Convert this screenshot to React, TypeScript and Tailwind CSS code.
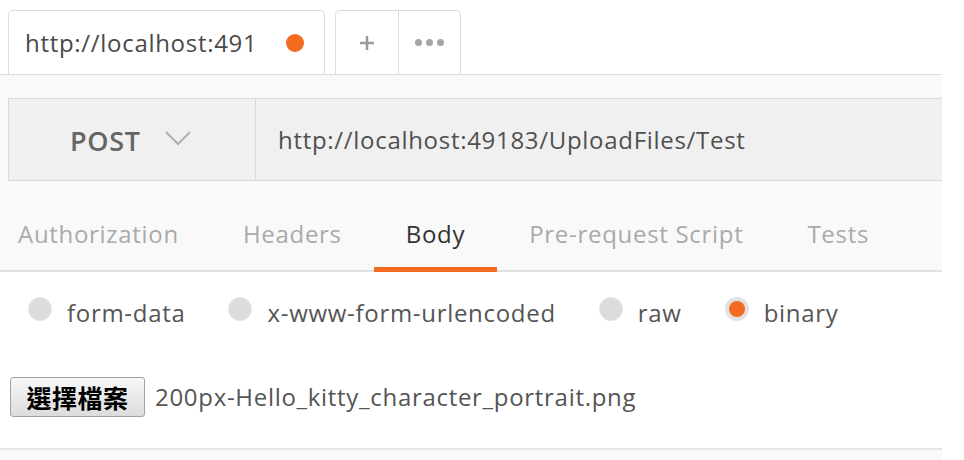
const tabs = ['Authorization', 'Headers', 'Body', 'Pre-request Script', 'Tests'];
const bodyTypes = ['form-data', 'x-www-form-urlencoded', 'raw', 'binary'];

export default function App() {
  return (
    <div className="w-[964px] h-[460px] overflow-hidden bg-white font-['Open_Sans',sans-serif] tracking-[0.7px]">
      <div className="w-[942px]">
        {/* Tab strip */}
        <div className="flex items-end h-[75px] pt-[10px] pl-[8px] gap-[10px] border-b border-[#dcdcdc] bg-white">
          <div className="flex items-center w-[317px] h-full pl-[16px] bg-white border border-b-0 border-[#dcdcdc] rounded-t-[5px]">
            <div className="w-[240px] whitespace-nowrap text-[24px] leading-[30px] text-[#4a4a4a]">
              http://localhost:491
            </div>
            <span className="ml-[21px] w-[18px] h-[18px] rounded-full bg-[#f26b21]" />
          </div>
          <div className="flex h-full w-[126px] bg-white border border-b-0 border-[#dcdcdc] rounded-t-[5px]">
            <div className="flex items-center justify-center w-[63px] border-r border-[#dcdcdc]">
              <svg width="18" height="18" viewBox="0 0 18 18">
                <path d="M9 2v14M2 9h14" stroke="#9a9a9a" strokeWidth="2.5" />
              </svg>
            </div>
            <div className="flex items-center justify-center flex-1 gap-[4px]">
              <span className="w-[7px] h-[7px] rounded-full bg-[#a5a5a5]" />
              <span className="w-[7px] h-[7px] rounded-full bg-[#a5a5a5]" />
              <span className="w-[7px] h-[7px] rounded-full bg-[#a5a5a5]" />
            </div>
          </div>
        </div>

        {/* Request bar */}
        <div className="bg-[#f9f9f9] pt-[23px] pl-[8px]">
          <div className="flex h-[83px] bg-[#f0f0f0] border border-r-0 border-[#dadada]">
            <div className="flex items-center w-[247px] pl-[61px] border-r border-[#dadada]">
              <span className="text-[27px] font-semibold text-[#666] mt-[3px]">POST</span>
              <svg className="ml-[24px] mt-[-2px]" width="26" height="15" viewBox="0 0 26 15">
                <path d="M1 1l12 12L25 1" fill="none" stroke="#b0b0b0" strokeWidth="2" />
              </svg>
            </div>
            <div className="flex items-center pl-[22px] text-[24px] text-[#505050]">
              http://localhost:49183/UploadFiles/Test
            </div>
          </div>
        </div>

        {/* Request tabs */}
        <div className="flex items-end h-[91px] bg-[#f9f9f9] border-b-2 border-[#e2e2e2]">
          {tabs.map((tab, i) => (
            <div
              key={tab}
              className={
                (i === 0 ? 'pl-[18px] pr-[32px] ' : 'px-[32px] ') +
                (tab === 'Body'
                  ? 'text-[#333] border-b-[5px] border-[#f26b21] -mb-[2px] pb-[18px]'
                  : 'text-[#aaa] pb-[21px]') +
                ' text-[24px] leading-[30px] whitespace-nowrap'
              }
            >
              {tab}
            </div>
          ))}
        </div>

        {/* Body */}
        <div className="bg-white pt-[25px] pl-[28px] border-b-2 border-[#e4e4e4]">
          <div className="flex items-start h-[30px]">
            {bodyTypes.map((type, i) => (
              <div key={type} className={'flex items-start ' + (i > 0 ? 'ml-[43px]' : '')}>
                {type === 'binary' ? (
                  <span className="flex items-center justify-center w-[24px] h-[24px] rounded-full bg-[#e2e2e2]">
                    <span className="w-[16px] h-[16px] rounded-full bg-[#f26b21]" />
                  </span>
                ) : (
                  <span className="w-[24px] h-[24px] rounded-full bg-[#dcdcdc] border border-[#e6e6e6]" />
                )}
                <span className="ml-[15px] text-[24px] leading-[30px] text-[#555] mt-[1px]">{type}</span>
              </div>
            ))}
          </div>

          <div className="flex items-center mt-[50px] mb-[31px] -ml-[18px]">
            <button className="w-[135px] h-[40px] border border-[#a3a3a3] rounded-[3px] bg-gradient-to-b from-[#f8f8f8] to-[#dcdcdc] text-[25px] leading-none tracking-[0.5px] text-black font-['Noto_Sans_CJK_TC',sans-serif] font-semibold">
              選擇檔案
            </button>
            <span className="ml-[10px] text-[24px] text-[#555]">200px-Hello_kitty_character_portrait.png</span>
          </div>
        </div>
        <div className="h-[20px] bg-[#f9f9f9]" />
      </div>
    </div>
  );
}
